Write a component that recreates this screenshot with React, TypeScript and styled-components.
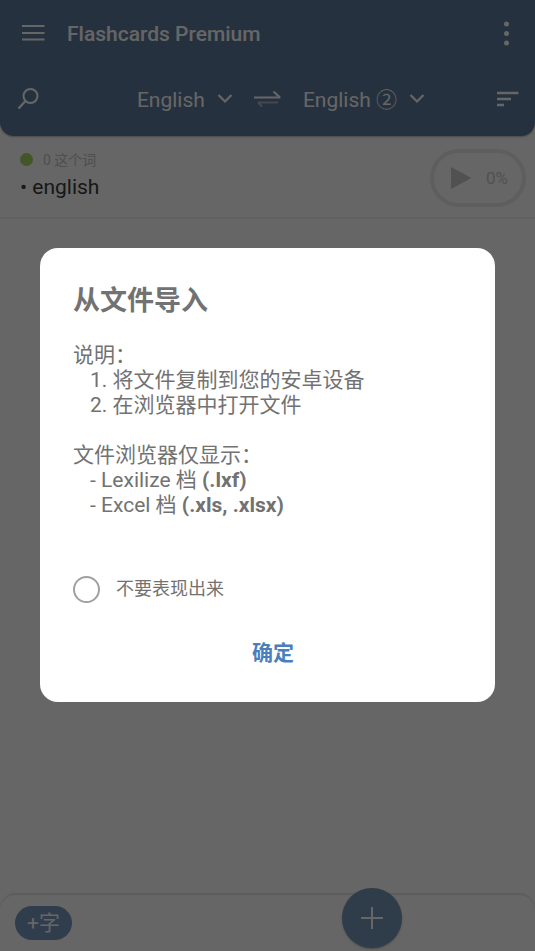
import React from "react";
import styled, { createGlobalStyle } from "styled-components";

const GlobalStyle = createGlobalStyle`
  *, *::before, *::after { box-sizing: border-box; }
  body {
    margin: 0;
    background: #ffffff;
    font-family: Roboto, "Noto Sans CJK SC", sans-serif;
  }
  button, select, input { font: inherit; color: inherit; }
  h1, h2, p, ol, ul { margin: 0; padding: 0; font: inherit; }
  ol, ul { list-style: none; }
  svg { display: block; }
`;

const Page = styled.div`
  display: flex;
  flex-direction: column;
  min-height: 100vh;
`;

const Header = styled.header`
  background: #5d7c9c;
  color: #ffffff;
  border-radius: 0 0 14px 14px;
  box-shadow: 0 1px 2px rgba(0, 0, 0, 0.3);
`;

const TitleBar = styled.div`
  display: flex;
  align-items: center;
  height: 68px;
  padding: 0 20px;
`;

const AppTitle = styled.h1`
  flex: 1;
  margin-left: 21px;
  font-size: 21px;
  line-height: 28px;
  font-weight: 500;
`;

const IconButton = styled.button`
  display: flex;
  align-items: center;
  justify-content: center;
  padding: 0;
  border: 0;
  background: none;
  cursor: pointer;
`;

const LanguageBar = styled.div`
  display: flex;
  align-items: center;
  height: 68px;
  padding: 0 16px 6px;
`;

const LanguagePair = styled.div`
  display: flex;
  align-items: center;
  justify-content: center;
  flex: 1;
  gap: 20px;
  padding-left: 26px;
`;

const LanguageField = styled.label`
  display: flex;
  align-items: center;
  position: relative;

  svg {
    position: absolute;
    right: 0;
    pointer-events: none;
  }
`;

const LanguageSelect = styled.select`
  appearance: none;
  field-sizing: content;
  padding: 2px 28px 0 0;
  border: 0;
  background: none;
  font-size: 21px;
  line-height: 28px;
  cursor: pointer;

  option { color: #222222; }
`;

const WordList = styled.ul`
  flex: 1;
`;

const WordRow = styled.li`
  display: flex;
  align-items: center;
  justify-content: space-between;
  height: 83px;
  padding: 0 9px 0 20px;
  border-bottom: 2px solid #f3f3f3;
`;

const WordSummary = styled.div`
  padding-bottom: 3px;
`;

const WordCount = styled.p`
  display: flex;
  align-items: center;
  gap: 10px;
  color: #c4c4c4;
  font-size: 14px;
  line-height: 20px;
`;

const StatusDot = styled.span`
  width: 13px;
  height: 13px;
  border-radius: 50%;
  background: #a8d860;
`;

const WordName = styled.p`
  margin-top: 3px;
  color: #3c3c3c;
  font-size: 21px;
  line-height: 28px;
`;

const ProgressButton = styled.button`
  display: flex;
  align-items: center;
  gap: 14px;
  height: 58px;
  padding: 0 14px 0 17px;
  margin-top: 2px;
  border: 4px solid #ebebeb;
  border-radius: 29px;
  background: none;
  color: #cbcbcb;
  font-size: 17px;
  cursor: pointer;
`;

const Footer = styled.footer`
  position: relative;
  display: flex;
  align-items: center;
  height: 57px;
  padding: 0 15px;
  border-top: 1px solid #e2e2e2;
  border-radius: 16px 16px 0 0;
  box-shadow: 0 -1px 2px rgba(0, 0, 0, 0.1);
`;

const AddWordButton = styled.button`
  height: 34px;
  padding: 0 12px;
  border: 0;
  border-radius: 17px;
  background: #7798bd;
  color: #ffffff;
  font-size: 21px;
  line-height: 34px;
  cursor: pointer;
`;

const AddButton = styled.button`
  position: absolute;
  top: -7px;
  right: 133px;
  display: flex;
  align-items: center;
  justify-content: center;
  width: 60px;
  height: 60px;
  padding: 0;
  border: 0;
  border-radius: 50%;
  background: #7798b8;
  color: #ffffff;
  box-shadow: 0 1px 2px rgba(0, 0, 0, 0.3);
  cursor: pointer;
`;

const Backdrop = styled.div`
  position: fixed;
  inset: 0;
  display: flex;
  align-items: center;
  padding: 0 40px 2px;
  background: rgba(0, 0, 0, 0.6);
`;

const Dialog = styled.section`
  flex: 1;
  padding: 35px 33px 33px;
  border-radius: 18px;
  background: #ffffff;
  color: #727272;
`;

const DialogTitle = styled.h2`
  font-size: 27px;
  line-height: 36px;
  font-weight: 700;
`;

const DialogBody = styled.div`
  margin-top: 24px;
  font-size: 21px;
  line-height: 25px;
`;

const Lines = styled.ol<{ $spaced?: boolean }>`
  padding-left: 17px;
  margin-bottom: ${(p) => (p.$spaced ? "25px" : "0")};
`;

const CheckLabel = styled.label`
  display: flex;
  align-items: center;
  gap: 16px;
  margin-top: 58px;
  font-size: 18px;
  line-height: 26px;
  cursor: pointer;
`;

const RoundCheckbox = styled.input`
  appearance: none;
  width: 27px;
  height: 27px;
  margin: 0;
  border: 2px solid #a0a0a0;
  border-radius: 50%;
  cursor: pointer;

  &:checked { background: #4a7fbf; }
`;

const DialogActions = styled.div`
  display: flex;
  justify-content: center;
  margin-top: 34px;
  padding-left: 11px;
`;

const ConfirmButton = styled.button`
  height: 32px;
  padding: 0;
  border: 0;
  background: none;
  color: #4a7fbf;
  font-size: 21px;
  line-height: 32px;
  font-weight: 700;
  cursor: pointer;
`;

const MenuIcon = () => (
  <svg width="26" height="20" viewBox="0 0 26 20" stroke="currentColor" strokeWidth="2" fill="none">
    <path d="M2 2h22.500M2 9h22.500M2 15.500h22.500" />
  </svg>
);

const MoreIcon = () => (
  <svg width="18" height="28" viewBox="0 0 18 28" fill="currentColor">
    <circle cx="9.500" cy="4" r="2.500" />
    <circle cx="9.500" cy="13.500" r="2.500" />
    <circle cx="9.500" cy="23" r="2.500" />
  </svg>
);

const SearchIcon = () => (
  <svg width="24" height="24" viewBox="0 0 24 24" stroke="currentColor" strokeWidth="2" fill="none">
    <circle cx="14.500" cy="9" r="7" />
    <path d="M9.500 14L2.500 21.500" strokeWidth="2.400" />
  </svg>
);

const ChevronIcon = () => (
  <svg width="16" height="12" viewBox="0 0 16 12" stroke="currentColor" strokeWidth="2.200" fill="none">
    <path d="M1.500 2L8 8.500l6.500-6.500" />
  </svg>
);

const SwapIcon = () => (
  <svg width="30" height="20" viewBox="0 0 30 20" fill="none" stroke="currentColor">
    <path d="M1 8.500h26L20.500 2.500" strokeWidth="2.200" strokeLinejoin="bevel" />
    <path d="M25 13.500H5l4 4" strokeWidth="2" opacity="0.450" strokeLinejoin="bevel" />
  </svg>
);

const SortIcon = () => (
  <svg width="23" height="18" viewBox="0 0 23 18" stroke="currentColor" strokeWidth="2.400" fill="none">
    <path d="M1 3h21.500M1 9h14M1 15h7" />
  </svg>
);

const PlayIcon = () => (
  <svg width="21" height="24" viewBox="0 0 21 24" fill="currentColor">
    <path d="M0 1v22L20.500 12z" />
  </svg>
);

const PlusIcon = () => (
  <svg width="22" height="22" viewBox="0 0 22 22" stroke="currentColor" strokeWidth="2" fill="none">
    <path d="M11 0v22M0 11h22" />
  </svg>
);

function LanguagePicker({ label, value }: { label: string; value: string }) {
  return (
    <LanguageField>
      <LanguageSelect aria-label={label} defaultValue={value}>
        <option>{value}</option>
      </LanguageSelect>
      <ChevronIcon />
    </LanguageField>
  );
}

export default function App() {
  return (
    <>
      <GlobalStyle />
      <Page>
        <Header>
          <TitleBar>
            <IconButton aria-label="Menu"><MenuIcon /></IconButton>
            <AppTitle>Flashcards Premium</AppTitle>
            <IconButton aria-label="More"><MoreIcon /></IconButton>
          </TitleBar>
          <LanguageBar>
            <IconButton aria-label="Search"><SearchIcon /></IconButton>
            <LanguagePair>
              <LanguagePicker label="From language" value="English" />
              <IconButton aria-label="Swap languages"><SwapIcon /></IconButton>
              <LanguagePicker label="To language" value="English ②" />
            </LanguagePair>
            <IconButton aria-label="Sort"><SortIcon /></IconButton>
          </LanguageBar>
        </Header>
        <WordList>
          <WordRow>
            <WordSummary>
              <WordCount><StatusDot />0 这个词</WordCount>
              <WordName>• english</WordName>
            </WordSummary>
            <ProgressButton><PlayIcon />0%</ProgressButton>
          </WordRow>
        </WordList>
        <Footer>
          <AddWordButton>+字</AddWordButton>
          <AddButton aria-label="Add"><PlusIcon /></AddButton>
        </Footer>
      </Page>
      <Backdrop>
        <Dialog role="dialog" aria-modal="true" aria-labelledby="import-title">
          <DialogTitle id="import-title">从文件导入</DialogTitle>
          <DialogBody>
            <p>说明：</p>
            <Lines $spaced>
              <li>1. 将文件复制到您的安卓设备</li>
              <li>2. 在浏览器中打开文件</li>
            </Lines>
            <p>文件浏览器仅显示：</p>
            <Lines as="ul">
              <li>- Lexilize 档 <b>(.lxf)</b></li>
              <li>- Excel 档 <b>(.xls, .xlsx)</b></li>
            </Lines>
          </DialogBody>
          <CheckLabel>
            <RoundCheckbox type="checkbox" />
            不要表现出来
          </CheckLabel>
          <DialogActions>
            <ConfirmButton>确定</ConfirmButton>
          </DialogActions>
        </Dialog>
      </Backdrop>
    </>
  );
}
